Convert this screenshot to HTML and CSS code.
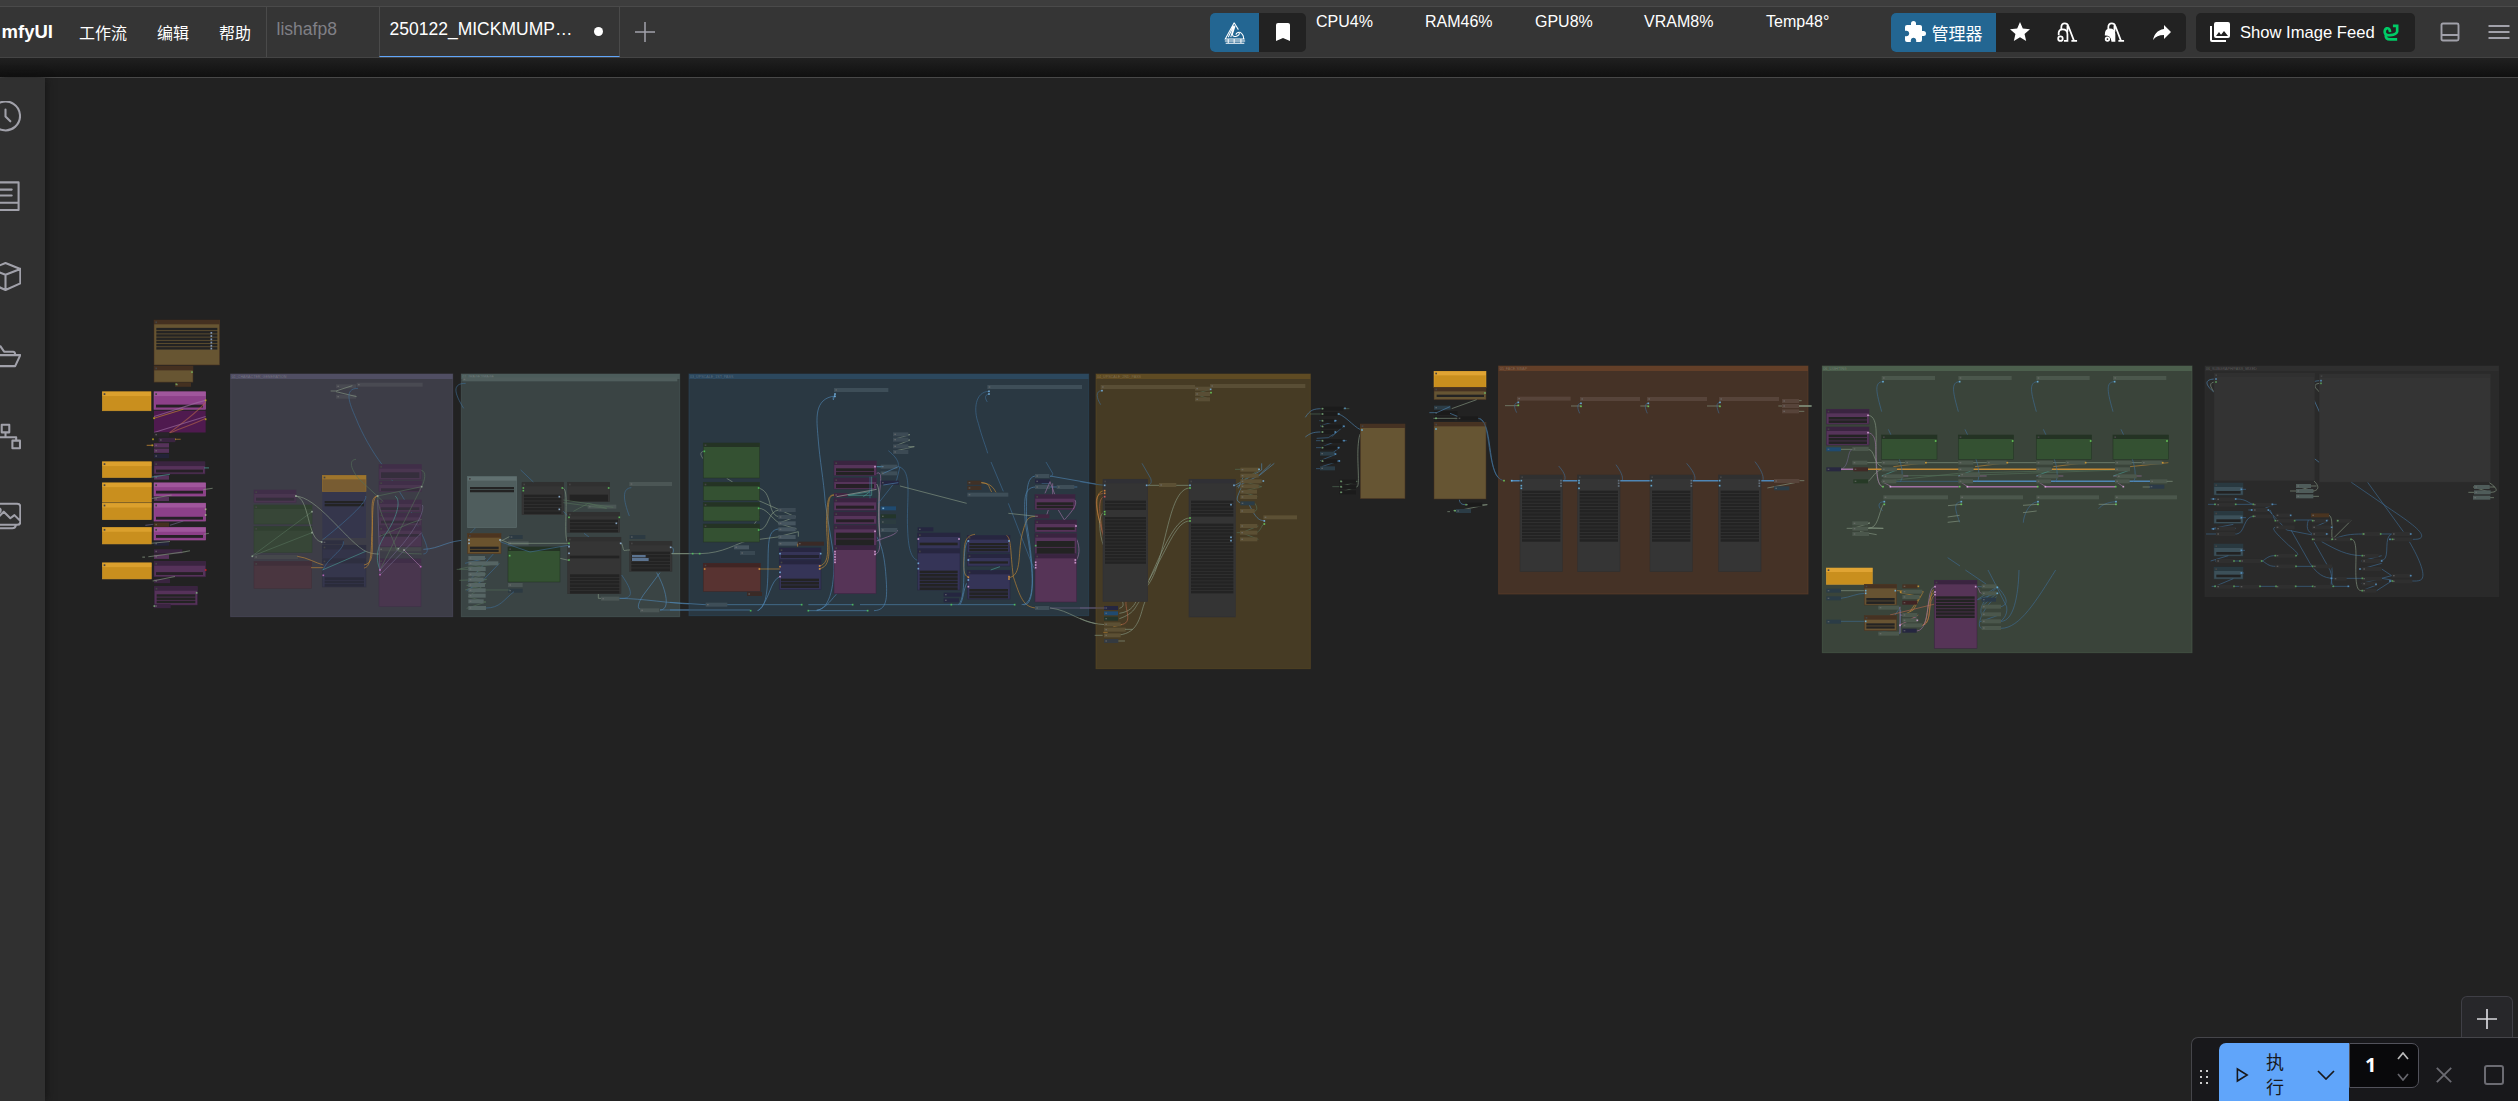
FILE: index.html
```html
<!DOCTYPE html>
<html lang="zh-CN">
<head>
<meta charset="utf-8">
<title>ComfyUI</title>
<link rel="stylesheet" href="styles.css">
</head>
<body>
<div class="app">
  <div class="strip"></div>
  <header class="menubar">
    <div class="brand"><span>mfyUI</span></div>
    <nav class="menus"><span>工作流</span><span>编辑</span><span>帮助</span></nav>
    <div class="tabs">
      <div class="tab">lishafp8</div>
      <div class="tab active"><span>250122_MICKMUMP…</span><i class="unsaved"></i></div>
      <svg class="add" viewBox="0 0 20 20"><path d="M10 0V20M0 10H20"/></svg>
    </div>
    <div class="tools">
      <div class="group">
        <button class="blue w49"><svg class="boat" viewBox="0 0 26 26"><path d="M12 1L1.500 20H24.500M12 1L17 9M11 5L5 18M12 4L8 18M13 5L10 14Q10 18 14 17Q19 16 18 12Q15 12 14 15M19 12Q24 16 23 20M1 22.500H25M2 25H24M5 20V25M12 20V25M20 20V25"/></svg></button>
        <button class="w47"><svg class="mdi" viewBox="0 0 24 24"><path d="M17,3H7A2,2 0 0,0 5,5V21L12,18L19,21V5C19,3.890 18.100,3 17,3Z"/></svg></button>
      </div>
      <div class="stats"><span>CPU4%</span><span>RAM46%</span><span>GPU8%</span><span>VRAM8%</span><span>Temp48°</span></div>
      <div class="group">
        <button class="blue manager"><svg class="mdi" viewBox="0 0 24 24"><path d="M20.500,11H19V7C19,5.890 18.100,5 17,5H13V3.500A2.500,2.500 0 0,0 10.500,1A2.500,2.500 0 0,0 8,3.500V5H4A2,2 0 0,0 2,7V10.800H3.500C5,10.800 6.200,12 6.200,13.500C6.200,15 5,16.200 3.500,16.200H2V20A2,2 0 0,0 4,22H7.800V20.500C7.800,19 9,17.800 10.500,17.800C12,17.800 13.200,19 13.200,20.500V22H17A2,2 0 0,0 19,20V16H20.500A2.500,2.500 0 0,0 23,13.500A2.500,2.500 0 0,0 20.500,11Z"/></svg><span>管理器</span></button>
        <button class="w47"><svg class="mdi" viewBox="0 0 24 24"><path d="M12,17.270L18.180,21L16.540,13.970L22,9.240L14.810,8.620L12,2L9.190,8.620L2,9.240L7.450,13.970L5.820,21L12,17.270Z"/></svg></button>
        <button class="w47"><svg class="vac" viewBox="0 0 24 24"><path d="M5.500 8V6Q5.500 1.500 9.500 1.500Q12.500 1.500 13.500 4.500L20 21.500H23.500M17 21.500H23.500M12.500 4V11"/><path d="M2.500 15V12Q3 8.500 7 8.500Q12.500 8.500 12.500 14V21.500H8.500"/><circle cx="4.500" cy="19" r="2.600"/></svg></button>
        <button class="w47"><svg class="vac" viewBox="0 0 24 24"><path d="M5.500 8V6Q5.500 1.500 9.500 1.500Q12.500 1.500 13.500 4.500L20 21.500H23.500M17 21.500H23.500M12.500 4V11"/><path fill="#fff" d="M2.500 14.500Q2.500 8.500 7 8.500Q12.500 8.500 12.500 14V21.500H10Q9 14.500 2.500 14.500Z"/><circle cx="4.500" cy="19.500" r="2"/></svg></button>
        <button class="w46"><svg class="mdi" viewBox="0 0 24 24"><path d="M21,12L14,5V9C7,10 4,15 3,20C5.500,16.500 9,14.900 14,14.900V19L21,12Z"/></svg></button>
      </div>
      <div class="group feed">
        <button><svg class="mdi" viewBox="0 0 24 24"><path d="M22,16V4A2,2 0 0,0 20,2H8A2,2 0 0,0 6,4V16A2,2 0 0,0 8,18H20A2,2 0 0,0 22,16M11,12L13.030,14.710L16,11L20,16H8M2,6V20A2,2 0 0,0 4,22H18V20H4V6"/></svg><span>Show Image Feed</span><svg class="snake" viewBox="0 0 18 18"><path d="M7.500 8.500Q7 4 4 4.500Q1.500 5.500 1.800 9Q2.500 12.500 8 11.800Q14 11 15 8V2H10.500M3 11Q2 16.500 8 16.300H15"/></svg></button>
      </div>
      <svg class="ico panel" viewBox="0 0 20 20"><path d="M3 1.500H17Q18.500 1.500 18.500 3V17Q18.500 18.500 17 18.500H3Q1.500 18.500 1.500 17V3Q1.500 1.500 3 1.500ZM1.500 13H18.500"/></svg>
      <svg class="ico burger" viewBox="0 0 22 20"><path d="M.500 4H21.500M.500 10H21.500M.500 16H21.500"/></svg>
    </div>
  </header>
  <div class="shade"></div>
  <main class="main">
    <aside class="side">
      <svg viewBox="-45 -45 90 90"><path d="M-40 -14A42 42 0 1 1 -38 16M-42 -30V-12H-24M0 -20V0L14 14"/></svg>
      <svg viewBox="-45 -45 90 90"><path d="M-30 -41H38V39H-30Q-38 39 -38 30V-32Q-38 -41 -30 -41ZM-38 18H38M-18 -20H18M-18 -3H18"/></svg>
      <svg viewBox="-45 -45 90 90"><path d="M0 -39L43 -22V20L0 39L-43 20V-22ZM-43 -22L0 -5L43 -22M0 -5V39"/></svg>
      <svg viewBox="-45 -45 90 90"><path d="M-41 28V-24Q-41 -30 -35 -30H-15L-4 -14H22Q28 -14 28 -6V-4M-41 28L-26 -4H43L28 28H-41"/></svg>
      <svg viewBox="-45 -45 90 90"><path d="M-11 -34H11V-12H-11ZM-42 12H-20V34H-42ZM20 12H42V34H20ZM0 -12V2M-31 12V2H31V12"/></svg>
      <svg viewBox="-45 -45 90 90"><path d="M-30 -37H34Q43 -37 43 -28V16Q43 24 34 24H-30Q-38 24 -38 16V-28Q-38 -37 -30 -37ZM-38 20L-5 -14L14 5L26 -4L42 12M-28 34H20Q28 34 30 26"/><circle cx="-20" cy="-18" r="6"/></svg>
    </aside>
    <svg class="graph" id="graph" viewBox="45 78 2473 1023"></svg>
  </main>
</div>
<div class="dock">
  <div class="plus"><svg viewBox="0 0 20 20"><path d="M10 0V20M0 10H20"/></svg></div>
  <div class="runbar">
    <svg class="grip" viewBox="0 0 9 15"><path d="M0 0h2v2H0zM6 0h2v2H6zM0 6h2v2H0zM6 6h2v2H6zM0 12h2v2H0zM6 12h2v2H6z"/></svg>
    <div class="run">
      <svg class="play" viewBox="0 0 14 16"><path d="M1.500 1.500V14.500L12 8Z"/></svg>
      <span>执<br>行</span>
      <svg class="chev" viewBox="0 0 18 10"><path d="M1 1L9 9L17 1"/></svg>
    </div>
    <div class="count"><span>1</span>
      <div><svg viewBox="0 0 12 8"><path d="M1 7L6 1L11 7"/></svg><svg class="dim" viewBox="0 0 12 8"><path d="M1 1L6 7L11 1"/></svg></div>
    </div>
    <svg class="act" viewBox="0 0 20 20"><path d="M2 2L18 18M18 2L2 18"/></svg>
    <svg class="act sq" viewBox="0 0 20 20"><rect x="1" y="1" width="18" height="18" rx="2"/></svg>
  </div>
</div>
<script src="graph.js"></script>
</body>
</html>
```
FILE: styles.css
```css
* { box-sizing: border-box; }
body { margin: 0; background: #222; color: #fff; font-family: "Liberation Sans", "Noto Sans CJK SC", sans-serif; overflow: hidden; }
.app { height: 1101px; display: flex; flex-direction: column; }
svg { flex: none; fill: none; }
.strip { height: 7px; background: #3d3d3d; border-bottom: 1px solid #4a4a4a; }
.menubar { height: 51px; background: #353535; border-bottom: 1px solid #444; display: flex; flex: none; }
.shade { height: 20px; flex: none; background: linear-gradient(#202020, #101010); border-bottom: 1px solid #484848; }
.brand { width: 53px; display: flex; justify-content: flex-end; font-size: 18.500px; font-weight: bold; line-height: 49px; flex: none; }
.menus { display: flex; gap: 30px; padding: 0 14.500px 0 26px; font-size: 16px; line-height: 54px; white-space: nowrap; }
.tabs { display: flex; align-items: stretch; font-size: 17.500px; line-height: 44px; }
.tab { width: 113px; border-left: 1px solid #4a4a4a; padding-left: 10px; color: #808086; }
.tab.active { width: 241px; color: #fff; border-right: 1px solid #4a4a4a; border-bottom: 1px solid #60a5fa; display: flex; }
.unsaved { width: 9px; height: 9px; border-radius: 50%; background: #fff; margin: 20px 0 0 22px; }
.add { width: 20px; height: 20px; margin: 15px 0 0 15px; stroke: #a1a1aa; stroke-width: 1.500; }
.tools { margin-left: auto; width: 1308px; display: flex; align-items: flex-start; padding-top: 6px; }
.group { height: 39px; display: flex; background: #222; border-radius: 5px; overflow: hidden; }
button { border: 0; margin: 0; padding: 0; background: none; color: #fff; font: inherit; display: flex; align-items: center; justify-content: center; height: 39px; }
.blue { background: #236692; }
.w49 { width: 49px; } .w47 { width: 47px; } .w46 { width: 49px; }
.mdi { width: 24px; height: 24px; fill: #fff; }
.group > button > .mdi, .group > button > .vac { margin-top: -1px; }
.boat { width: 22px; height: 24px; stroke: #fff; stroke-width: 1.200; }
.vac { width: 22px; height: 21px; stroke: #fff; stroke-width: 2; }
.stats { width: 585px; padding: 0 0 0 10px; display: grid; grid-template-columns: 109px 110px 109px 122px 1fr; font-size: 16px; line-height: 17px; }
.manager { width: 105px; gap: 5px; font-size: 17px; padding-right: 2px; }
.feed { margin-left: 10px; font-size: 16.600px; width: 219px; }
.feed button { padding-left: 12px; gap: 8px; }
.snake { width: 17px; height: 17px; stroke: #0c6; stroke-width: 2.800; }
.ico { stroke: #a1a1aa; stroke-width: 1.900; height: 20px; margin-top: 9px; }
.panel { width: 20px; margin-left: 25px; }
.burger { width: 22px; margin-left: 28px; }
.main { flex: 1; display: flex; min-height: 0; }
.side { width: 45px; flex: none; background: #303030; display: flex; flex-direction: column; gap: 49px; padding-top: 23px; overflow: hidden; box-shadow: 0 0 9px #111; z-index: 1; }
.side svg { width: 31px; height: 31px; margin-left: -10px; stroke: #a1a1aa; stroke-width: 6; stroke-linejoin: round; stroke-linecap: round; flex: none; }
.graph { width: 2473px; height: 1023px; }
.dock { position: absolute; right: 0; bottom: 0; width: 327px; height: 105px; display: flex; flex-direction: column; align-items: flex-end; }
.plus { width: 52px; height: 41px; margin-right: 5px; background: #27272a; border: 1px solid #3f3f46; border-bottom: 0; border-radius: 6px 6px 0 0; display: flex; align-items: center; justify-content: center; padding-top: 4px; }
.plus svg { width: 20px; height: 20px; stroke: #d8d8dc; stroke-width: 1.700; }
.runbar { width: 327px; height: 64px; background: #18181b; border: 1px solid #45454a; border-right: 0; border-bottom: 0; border-radius: 7px 0 0 0; display: flex; padding-top: 5px; }
.grip { width: 9px; height: 15px; margin: 27px 0 0 8px; fill: #ccc; }
.run { width: 130px; height: 59px; margin-left: 10px; background: #60a5fa; border-radius: 7px 0 0 0; color: #18181b; display: flex; padding-left: 17px; }
.run svg { stroke: #18181b; stroke-width: 1.700; }
.play { width: 13px; height: 16px; margin-top: 24px; }
.run span { font-size: 18px; line-height: 25px; margin: 8px 0 0 17px; width: 18px; }
.chev { width: 18px; height: 10px; margin: 27px 0 0 33px; }
.count { width: 70px; height: 45px; background: #09090b; border: 1px solid #52525b; border-radius: 0 7px 7px 0; display: flex; justify-content: space-between; padding: 0 9px 0 15px; font-size: 20px; font-weight: bold; line-height: 42px; font-family: "Noto Sans", sans-serif; }
.count div { display: flex; flex-direction: column; gap: 13px; padding-top: 8px; }
.count svg { width: 12px; height: 8px; stroke: #bbb; stroke-width: 1.700; }
.count svg.dim { stroke: #66666c; }
.act { width: 18px; height: 18px; margin: 23px 0 0 16px; stroke: #6b6b72; stroke-width: 2; }
.act.sq { width: 20px; height: 20px; margin: 22px 0 0 31px; }
```
FILE: graph.js
```js
// Node graph, zoomed far out. One drawing command per line:
//   F x y w h fill bar name      group frame
//   r x y w h fill               plain block
//   n x y w h body title         node
//   w x y w count pitch          widget rows
//   c x y w fill                 collapsed node
//   l colour path                link
//   d colour x y ...             ports
const C = { b: '#4f86b5', g: '#899b85', G: '#55705a', o: '#c68a34', m: '#a171a5', t: '#4a9a94', r: '#b5664a', B: '#3e6d95', p: '#6e6488', w: '#a9b0a6' };
const scenes = [
[0, 70, `
n 462 700 197 126 #675532 #443020
w 469 722 183 7 9
d #9ab4d8 634 736 634 745 634 754 634 763 634 772 634 780
n 462 829 117 45 #675532 #443020
c 525 875 48 #443020
d #77b45e 576 846 529 880
n 307 901 146 53 #c98f1e #dba02d
n 462 901 155 49 #8d4089 #a0569c
r 468 937 141 8 #262026
r 462 954 155 61 #4f1a4f
l m M462 970C500 960 590 930 617 925
l r M508 1016C560 980 600 950 617 930
l m M462 1015L617 970
l r M510 1016C550 1000 600 985 617 975
l o M462 975L550 950
d #c8b020 617 925 617 978 459 1034 525 1034 457 1051 462 975
c 462 1015 45 #28242a
c 476 1030 50 #3a2440
c 462 1045 45 #56325a
c 462 1060 45 #56325a
c 462 1075 45 #232338
l o M440 1051H460M525 1034H542
n 307 1097 147 44 #c98f1e #dba02d
n 462 1097 153 34 #56325a #3a2440
r 468 1119 141 8 #262026
c 462 1135 45 #56325a
l t M455 1140L510 1132M612 1114H627
n 307 1156 147 54 #c98f1e #dba02d
n 462 1156 155 37 #8d4089 #a0569c
r 468 1178 141 8 #262026
c 462 1195 45 #56325a
l g M455 1200L515 1190M610 1175L638 1171
n 307 1213 147 46 #c98f1e #dba02d
n 462 1213 155 50 #8d4089 #a0569c
r 468 1251 141 8 #262026
c 462 1267 45 #443020
l p M436 1275L460 1272M510 1275L550 1263
d #b0c090 617 1230 617 1246
n 307 1281 147 46 #c98f1e #dba02d
n 462 1281 155 35 #8d4089 #a0569c
r 468 1302 141 8 #262026
c 462 1320 45 #232338
l g M455 1325L510 1320M612 1300L627 1297
c 462 1342 85 #3a2440
c 462 1357 45 #56325a
l g M427 1364H435M445 1363L548 1350L570 1346
n 307 1380 147 45 #c98f1e #dba02d
n 462 1376 155 43 #56325a #3a2440
r 468 1406 141 8 #262026
d #e02020 617 1400
c 462 1425 48 #3a2440
l g M458 1431L525 1418
n 463 1446 129 52 #56325a #3a2440
w 470 1468 116 3 9
c 462 1495 50 #3a2440
d #7fb57f 590 1464 463 1501
`, .35714],
[210, 350, `
F 62 72 666 728 #3d3d47 #504e63 01_CHARACTER_GENERATION
c 378 103 60 #484951
c 378 134 60 #484951
c 440 98 198 #494a52
l g M362 123H378M378 123L427 107M378 125L440 140
l B M444 115C400 115 418 160 438 205C455 250 490 310 515 342C550 400 590 450 620 520C655 590 660 610 640 612
n 132 420 126 38 #4a3650 #402e48
r 138 443 115 9 #352e3c
n 132 465 174 57 #374637 #304030
n 132 530 174 77 #374637 #304030
l G M125 619L306 485M125 619L306 548
c 132 615 132 #45474b
n 132 635 173 80 #4a3640 #402f3a
n 337 376 131 48 #785c32 #9e752c
r 337 426 131 138 #35364c
w 344 453 118 2 9
c 337 571 65 #2e2f40
n 337 586 131 40 #333449 #2e2f40
n 337 628 131 83 #35364c #2e2f40
w 344 682 118 3 10 #2a2b3a
n 507 344 127 45 #4a3650 #402e48
r 513 367 115 17 #352e3c
n 507 393 127 32 #4a3650 #402e48
r 513 415 115 8 #352e3c
n 507 450 127 36 #4a3650 #402e48
r 513 472 115 8 #352e3c
n 507 490 127 36 #4a3650 #402e48
r 513 512 115 8 #352e3c
n 507 530 127 60 #4a3650 #402e48
r 513 552 115 8 #352e3c
c 507 592 127 #45474b
n 507 627 126 142 #49364e #402e48
l g M255 438C320 440 400 560 460 600C480 612 500 612 507 612
l g M255 438C300 440 290 570 335 576
l B M467 438C475 455 400 520 337 570M400 574C405 600 350 625 340 660
l o M503 438C480 440 487 470 487 560C487 610 490 640 462 645M503 438C484 440 490 500 485 560C484 640 475 652 462 654M262 619C290 622 320 640 340 645M303 653H340
l t M337 660L467 604M555 438C575 450 560 500 535 540C500 590 495 620 510 660
l G M438 328C410 330 430 370 450 390L520 455M503 438L635 410M634 361C650 365 645 390 635 410L510 660
l G M503 440C500 480 550 560 560 600C590 615 620 610 635 612M507 560L600 520L635 508
l p M637 465C645 480 620 530 580 580L510 660M503 450L510 670M635 548L510 675
l m M582 600L632 650
l b M640 598C690 597 710 570 777 570
d #9fb09f 127 619 258 438 335 576 306 485 306 548 635 410 503 438 565 596 582 600
d #d070d0 632 650 510 660 510 674 340 676
F 754 72 655 728 #3a4444 #4c5c5b 02_IMAGE2IMAGE
c 757 82 645 #505e5d
l B M767 100C725 100 733 130 761 175M850 612L775 695M797 533L780 550
n 773 380 147 153 #4f5d5d #607070
w 780 411 132 2 9
n 936 397 125 97 #353535 #303030
w 942 434 112 6 10
n 1073 397 126 58 #353535 #303030
r 1079 434 115 20 #232323
c 1258 396 128 #4b5655
c 1133 464 86 #4b5655
l g M1060 415C1080 420 1055 580 1077 580
l G M1060 450L1210 472M1060 458L1190 475L1135 460L1090 484
l B M932 360L970 396M1060 484L1075 500M1264 413C1235 415 1240 450 1258 498M1122 550L1137 561
n 1073 487 156 60 #353535 #303030
w 1080 509 144 4 10
n 1073 562 160 169 #353535 #303030
r 1080 617 148 8 #232323
w 1080 673 148 6 10
n 1259 574 127 90 #353535 #303030
w 1264 605 116 6 10
r 1266 615 41 7 #5b7390
r 1266 624 50 9 #5b7390
c 1259 555 47 #2c3a42
n 773 551 100 60 #6a532e #4d3520
w 780 590 86 2 9
c 898 555 40 #2c3a42
c 894 574 62 #4b5655
l g M870 575L898 560M870 568L898 580H1077M1050 625L1076 631
n 894 591 156 105 #345232 #243324
c 894 699 44 #4b5655
c 894 716 44 #2c3a42
l G M740 658H775M748 691L830 688L770 706L828 720H900M765 720L828 700L775 740L828 756L770 775M748 657L828 640L865 640L775 655L828 672L775 690
l B M765 640L828 625M870 575L960 606L1080 585M828 774C870 774 880 750 912 725M868 640L820 690L770 722M1235 675C1280 740 1260 745 1228 745
c 775 618 50 #566564
c 775 634 90 #566564
c 775 651 52 #566564
c 775 667 50 #566564
c 775 683 46 #566564
c 775 699 50 #566564
c 775 715 52 #566564
c 775 731 52 #566564
c 775 748 46 #566564
c 775 768 53 #566564
l g M1165 732V745H1175M1235 580C1245 610 1235 600 1260 600M1384 611H1440
l b M1386 592C1395 600 1388 612 1386 612M1228 745C1300 746 1380 760 1440 762M1350 668L1300 735C1280 765 1280 780 1300 780M1340 668C1365 710 1385 780 1350 780H1440
c 1173 740 55 #4b5655
c 1290 775 58 #4b5655
d #62d062 940 414 940 422 1057 414 1196 414 1077 502 1228 502 1077 580 1077 630 899 617
d #9ec4e8 1048 440 1048 478 1219 520 1232 580 1382 592 777 570 777 580 870 570 1077 590 1077 610
`],
[670, 350, `
F 57 72 1199 725 #2a3842 #2c485e 03_UPSCALE_1ST_PASS
l b M495 132L490 150C488 142 490 138 495 138C430 145 440 210 444 260C450 340 460 380 466 460L490 610C497 700 480 780 440 780
l b M0 757L105 764H395M0 780H240M415 764H548M415 782H593M570 764H1035M262 782C310 770 285 600 300 560C305 540 320 537 328 537M265 782C300 750 300 690 330 680M440 782C470 775 490 740 500 732M612 782C650 780 653 750 648 680C642 590 625 570 620 560
l g M5 611H90C160 610 200 580 230 573L330 560M103 304C85 305 95 320 99 326M170 385L188 396M265 414C310 425 290 490 325 500M265 475C290 475 300 500 328 520M265 540C300 540 290 480 330 480M253 522L268 500M262 450L375 500M378 500L325 520L380 537M385 560V545L325 560
n 100 279 169 105 #345132 #243324
n 100 397 169 54 #345132 #243324
n 100 458 169 55 #345132 #243324
n 100 522 169 54 #345132 #243324
n 100 640 171 84 #583331 #402524
c 231 726 45 #3a2a26
c 192 586 45 #46555f
c 210 603 45 #394852
c 325 474 52 #3c4a54
c 325 495 52 #3c4a54
c 325 514 52 #46555f
c 325 532 52 #46555f
c 325 555 52 #46555f
c 325 575 60 #46555f
c 383 575 79 #3a2a26
n 328 594 125 34 #353457 #272640
r 333 615 114 9 #232330
n 328 631 125 88 #353457 #272640
w 333 686 114 3 10
l o M268 657H330M383 581V590M448 648C490 640 465 560 470 500C472 440 478 435 494 434M448 656C495 650 470 560 474 500C475 440 480 436 494 436
c 492 114 163 #3e4e58
n 492 333 127 44 #56345a #3a2440
w 498 355 114 2 11
n 492 384 127 33 #56345a #3a2440
r 498 402 114 12 #262026
c 492 429 40 #402540
l t M620 350L660 352M535 436L600 425L580 440M535 436H605V380
n 492 445 127 36 #56345a #3a2440
r 498 467 114 9 #262026
n 492 486 127 36 #56345a #3a2440
r 498 508 114 9 #262026
n 492 526 127 60 #56345a #3a2440
w 498 548 114 2 20
n 492 588 126 143 #563457 #3a2440
l m M620 370C640 360 630 400 627 450C625 550 640 610 615 612M683 540C680 555 650 560 620 573
l w M620 402C635 420 620 500 630 560M500 440L620 418
l B M655 302C690 330 685 345 685 350C730 360 708 450 713 540C715 600 725 630 748 632M690 350L680 390L625 460M600 445V380
l g M690 408L890 460M670 253L720 254L672 268L720 270L672 289L733 290L670 304
c 669 247 46 #3c4a54
c 669 263 46 #3c4a54
c 669 283 46 #3c4a54
c 669 300 46 #3c4a54
c 632 344 50 #3e4e58
c 632 364 50 #3e4e58
c 632 392 55 #252640
c 632 469 46 #1f4a70
c 632 493 46 #23352a
c 632 510 46 #2c3c40
c 632 534 50 #3e4e58
l b M620 350H640M685 350L640 370M685 398L640 405
c 743 532 47 #252640
n 743 549 127 47 #353457 #272640
w 749 578 114 1 10
n 743 598 127 122 #353457 #272640
w 749 662 114 6 10
c 821 728 52 #252640
c 821 745 46 #252640
c 952 105 284 #3e4e58
l B M957 124C915 125 910 180 925 220C935 260 948 290 953 310M963 336L1000 424M1015 460L1085 640C1095 660 1097 660 1097 660M957 132C940 135 948 150 952 156M1128 336L1148 370C1150 378 1140 380 1140 380
c 892 392 42 #403126
c 892 408 42 #403126
c 892 428 123 #3e4e58
l o M934 398C960 400 955 410 965 426M934 398C970 400 975 425 978 427
n 892 557 128 50 #353457 #272640
w 898 579 116 3 9
n 892 612 128 36 #353457 #272640
w 898 634 116 1 9
n 892 661 128 86 #353457 #272640
w 898 717 116 3 10
l o M895 680C880 680 880 650 882 620C882 570 890 557 915 553M1015 683C1060 680 1040 600 1060 540C1070 500 1080 500 1100 499M1010 556C1025 570 1020 600 1030 680C1050 740 1060 773 1100 774
l t M962 660L990 650
l b M1097 378C1070 380 1068 420 1070 520C1090 640 1100 770 1060 764M1097 411C1060 412 1062 450 1066 520C1095 680 1095 764 1055 764M870 764C880 750 880 720 890 700M865 764C895 740 870 590 895 573M1140 378L1300 406M1140 411H1222M1115 400H1140
c 1095 372 43 #3e4e58
c 1095 388 45 #252640
c 1095 405 45 #3e4e58
c 1160 405 53 #3e4e58
l m M1125 430L1140 395L1155 435M1148 400V435
n 1095 434 120 45 #56345a #3a2440
w 1100 457 110 2 10
l m M1215 450C1225 465 1200 490 1183 510L1165 480M1135 480L1130 495M1220 568C1230 590 1230 620 1215 635
c 1095 493 43 #402540
n 1095 510 125 36 #56345a #3a2440
w 1100 532 114 1 10
n 1095 551 125 60 #56345a #3a2440
w 1100 573 114 2 20
n 1095 613 125 143 #563457 #3a2440
l g M1015 490L1100 499M1140 774C1200 780 1230 820 1300 824
l p M1140 774H1300
c 1095 768 43 #3e4e58
c 107 758 65 #3e4e58
d #50d060 103 304 266 414 266 475 266 540 68 611 89 611 242 782 395 764 548 764 415 782 593 782 844 764 1034 764 1097 587
d #7fc0f0 495 132 495 139 330 611 330 667 452 611 745 640 745 656 957 124 957 132 895 573 1017 573 895 630 895 690 640 475
d #e8a040 104 657 268 657 330 650 449 648 449 657 895 682 1017 680 1017 687
d #e8b0e8 495 605 495 613 495 621 495 629 495 637 615 350 615 544 615 605 615 613 330 680 745 567 867 567 895 710 1097 637 1097 645 1097 653 1216 630 1216 638 1218 528
`],
[1080, 350, `
F 48 72 643 884 #463b24 #5f4b23 04_UPSCALE_2ND_PASS
c 62 105 283 #594e35
l B M66 122C45 122 50 145 62 164M186 340L212 385C217 400 210 406 200 406M0 395C30 400 50 404 75 406
l G M390 118L345 132L390 148
l g M200 406H330M0 805C20 815 50 823 75 824M200 710C260 640 260 415 330 414M203 700C260 570 290 505 330 504M207 690C270 580 290 513 330 513
c 345 110 45 #594e35
c 345 126 45 #594e35
c 345 142 45 #594e35
c 390 102 286 #594e35
l r M75 430C45 430 45 450 55 500C65 540 68 550 70 560M75 440C50 440 60 500 68 550
l o M75 422C40 422 50 480 60 520
l g M75 485C50 490 60 560 70 585
l g M115 855C180 850 180 790 195 755M118 790C150 785 160 770 168 755M118 806C165 790 165 770 178 755M118 775C135 770 128 760 128 755
l r M122 824C160 820 135 780 138 755
l o M100 830L125 824M70 847H83
n 69 388 134 366 #343434 #303035
w 75 452 123 3 10
w 75 501 123 15 9.500
n 327 388 139 413 #343434 #303035
w 333 452 127 5 10
w 333 521 127 22 9.600
c 237 399 52 #5c5034
l b M465 406L485 395L545 360L545 340M470 410L540 375L583 340M475 415L490 380M538 375L572 342M480 458C460 450 480 430 488 400M508 465C530 510 540 512 555 512
l G M465 358H540L485 393L545 410L485 425L532 440M525 460C540 485 520 485 515 485M470 548H485L535 528M485 548L535 568M530 548C545 540 545 522 553 522
c 481 353 55 #5c5034
c 481 371 55 #5c5034
c 481 388 64 #5c5034
c 481 403 55 #5c5034
c 481 419 50 #5c5034
c 481 435 50 #5c5034
c 481 454 43 #2b3c46
c 480 477 44 #5c5034
c 550 496 101 #5c5034
c 480 522 52 #5c5034
c 480 542 52 #5c5034
c 480 562 52 #5c5034
c 72 768 42 #252640
c 72 784 42 #1f4a70
c 72 800 42 #23352a
c 72 817 50 #5c5034
c 72 833 65 #5c5034
c 72 850 50 #5c5034
c 72 867 43 #343a40
l p M0 774H75
l g M135 838H158M44 856H68M115 873H135
d #80c0f0 66 122 74 406 200 406 330 406 392 118 453 464 453 562 453 572 462 406 537 358 550 393 553 513
d #f09040 74 422 74 430
d #f06060 74 440
d #70e060 74 485 74 493 330 414 330 504 330 513 393 128 553 522
l b M676 202C690 180 700 176 727 176M676 261C690 250 700 246 722 246M776 192C800 200 830 240 847 240
l B M718 212H770L720 228H792L755 260M770 246L745 263L710 265M708 272H800M770 273L720 293M708 293H778L750 315M770 312L720 332H780L725 350M708 356H727
l G M690 192H780M727 176H808M780 394H832L782 410H757M782 427L832 410
l g M832 410C840 400 830 330 835 280C838 250 842 249 846 249
c 722 170 68 #1b1b1b
c 722 186 50 #1b1b1b
c 722 207 40 #1b1b1b
c 722 224 65 #1b1b1b
c 722 240 40 #1b1b1b
c 722 267 65 #1b1b1b
c 722 287 50 #1b1b1b
c 720 305 45 #2b3c46
c 722 328 50 #1b1b1b
c 720 349 45 #2b3c46
c 778 389 50 #1b1b1b
c 778 405 50 #1b1b1b
c 778 421 50 #1b1b1b
d #70a870 727 176 727 192 727 212 727 229 727 246 727 272 727 293 727 333 783 394 783 410 783 427 846 249
d #5a9cd0 776 192 795 175 766 212 792 229 766 246 792 272 776 293 766 312 778 333
n 841 222 134 224 #665533 #463222
n 1062 64 156 49 #c98f1e #e0a433
n 1062 112 156 37 #665533 #463222
r 1070 134 142 7 #232323
l g M1190 149L1115 176
c 1062 167 50 #2b3c46
c 1062 183 70 #1b1b1b
c 1062 199 62 #1b1b1b
c 1132 199 62 #1b1b1b
l b M1195 205C1240 210 1220 370 1262 388M1110 170L1070 188H1048M1132 199L1110 190M1138 449C1140 464 1150 464 1158 464
n 1062 217 156 230 #665533 #463222
l g M1158 464H1222L1135 482H1120M1102 485H1110M1060 205H1132
c 1155 458 52 #1b1b1b
c 1128 477 45 #2b3c46
d #70c070 1215 129 1068 205 1125 482 1158 464
d #70c0f0 1068 237 846 240
`],
[1480, 350, `
F 56 48 928 684 #453226 #633f28 05_FACE-SWAP
c 111 140 161 #57443a
c 300 141 180 #57443a
c 501 141 180 #57443a
c 717 141 180 #57443a
l g M75 167H115M273 168H303M481 168H505M681 168H720M895 168H910M950 152H965M955 184H973M958 392H973M862 414L945 398
c 906 147 51 #57443a
c 906 162 51 #57443a
c 906 178 51 #57443a
c 882 387 76 #57443a
c 882 409 46 #2b3c46
L g M957 168H995
l B M115 158C100 158 102 172 110 188M303 160C290 160 292 175 299 190M505 160C492 160 495 175 502 190M720 158C707 158 710 172 717 190
l B M236 348C260 375 255 385 254 391M408 344C430 375 428 385 427 391M620 340C650 375 645 385 644 391M825 335C852 370 850 385 849 391
l B M0 206L10 215C30 240 25 380 68 391
L b M93 392H124M243 392H296M416 392H514M635 392H719M840 392H882
n 120 375 127 290 #353535 #303030
w 126 422 115 16 9.700
n 293 375 127 290 #353535 #303030
w 299 422 115 16 9.700
n 510 375 127 290 #353535 #303030
w 516 422 115 16 9.700
n 716 375 127 290 #353535 #303030
w 722 422 115 16 9.700
d #70c0f0 115 157 303 160 505 160 720 157 124 392 124 407 124 415 297 392 297 399 297 415 514 392 514 407 719 392 719 407 95 392
d #70e060 115 166 303 169 505 169 720 169 72 392
d #6f7f8f 243 392 243 400 243 408 416 392 416 400 416 408 634 392 634 400 634 408 838 392 838 400 838 408
`],
[1800, 350, `
F 67 48 1109 860 #3a443a #4c5f4d 06_LIGHTING
c 245 78 160 #4b574c
c 475 78 160 #4b574c
c 709 78 160 #4b574c
c 939 78 160 #4b574c
l B M250 95C220 95 230 130 245 185M480 95C450 95 460 130 475 185M714 95C684 95 694 130 709 185M944 95C914 95 924 130 939 185M265 238L273 255M495 238L503 255M730 238L738 255M963 238L971 255
n 79 178 128 44 #56345a #3a2440
w 86 201 115 2 10
n 79 231 128 54 #56345a #3a2440
w 86 254 115 3 10
n 245 255 166 73 #345132 #243324
n 475 255 166 73 #345132 #243324
n 709 255 166 73 #345132 #243324
n 939 255 167 73 #345132 #243324
l g M205 196C240 200 225 280 228 330C230 390 235 400 247 410M120 298H205C225 300 220 340 245 350M160 338H1090M205 394C220 380 225 365 245 358
l G M245 378L530 375L960 360M250 394L475 370L940 358
l p M123 358C150 350 140 300 158 298
l m M205 248C235 255 225 300 230 350C232 400 240 408 247 410M247 378H325M475 378H560M709 378H790M940 378H1025M245 395L275 410M480 395L503 410M714 395L737 410M948 395L970 410
L m M123 358H160M271 410H476M502 410H712M736 410H945
L o M204 358H245M290 358H480M520 358H714M755 358H945
l o M280 350L378 338M525 350L622 338M760 350L857 338M990 350L1105 338
L b M510 394H714M750 394H945M985 394H1050
l B M250 394H480M298 328C310 360 308 395 300 394M528 328C540 360 538 395 530 394M763 328C775 360 773 395 765 394M997 328C1009 360 1007 395 999 394
l t M245 378L290 360M475 378L520 360M709 378L755 360M940 378L990 360
c 79 292 44 #1f4a70
c 157 291 49 #4b574c
c 157 332 45 #4b574c
c 79 352 44 #282840
c 160 352 44 #402a26
c 160 388 44 #263a26
c 245 332 50 #4b574c
c 315 332 60 #4b574c
c 245 352 45 #4b574c
c 250 373 60 #4b574c
c 245 388 44 #4b574c
c 475 332 45 #4b574c
c 560 332 60 #4b574c
c 475 352 45 #4b574c
c 480 368 60 #4b574c
c 475 388 44 #4b574c
c 709 332 50 #4b574c
c 797 332 60 #4b574c
c 709 352 45 #4b574c
c 715 373 60 #4b574c
c 709 388 44 #4b574c
c 945 332 50 #4b574c
c 1025 332 62 #4b574c
c 945 352 45 #4b574c
c 950 373 60 #4b574c
c 945 388 44 #4b574c
c 1050 388 52 #4b574c
c 1048 404 45 #2b3a48
l g M1100 394H1118M1028 411H1050
c 250 436 194 #4b574c
c 480 436 189 #4b574c
c 709 436 188 #4b574c
c 944 436 187 #4b574c
l B M253 455C230 455 235 475 248 482M484 455C455 457 470 490 479 517M714 455C685 457 670 500 670 518M948 455C920 457 905 465 896 476
l g M250 463C235 490 235 535 205 535M444 467L484 463M669 466L714 463M896 463H948M443 501L479 496M443 517L479 513M669 488L710 483M140 535H250L205 533M160 519H210L160 535M180 545L230 554
c 157 514 47 #4b574c
c 157 530 47 #4b574c
c 157 546 50 #4b574c
l B M443 623L480 648M496 660L558 702M564 660L590 710L620 770C625 800 600 814 603 814M657 660C655 740 640 814 603 814M767 660C710 750 660 835 603 835M603 770C640 760 600 720 592 710L530 750L590 730L545 770M545 795C530 760 590 715 592 712M545 835C525 830 550 770 590 740M530 710H590M603 793L540 815
n 79 654 138 49 #c98f1e #e0a433
c 79 716 44 #2b3c46
c 79 739 44 #2b3c46
c 79 809 44 #2b3c46
l g M123 722H195
l B M123 745C150 742 170 730 195 730M123 814H195M235 773H300L285 795M235 850C250 840 290 855 300 850L302 780
l o M290 722L370 725L340 780L310 795M300 728L360 740L330 785M370 825C400 820 380 720 405 718M365 828C390 820 375 740 405 726
l r M270 795L405 762M300 825L355 795M368 825C400 815 380 750 405 735
l m M300 825L350 800L300 795M350 843C395 840 375 712 405 710M300 770V850M525 710C540 710 535 730 545 730
n 193 703 97 62 #675332 #463222
w 199 744 85 2 10
n 193 797 97 45 #675332 #463222
w 199 820 85 2 9
c 235 767 62 #4b574c
c 235 845 62 #4b574c
c 307 703 45 #463222
c 307 719 60 #4b574c
c 307 735 52 #4b574c
c 307 752 45 #402424
c 307 789 45 #4b574c
c 307 805 45 #4b574c
c 307 820 60 #4b574c
c 307 836 43 #252640
n 403 691 128 204 #563457 #3a2440
w 408 739 116 7 9.600
c 545 703 45 #4b574c
c 545 724 45 #4b574c
c 545 743 43 #2b3a48
c 545 764 58 #4b574c
c 545 787 58 #4b574c
c 545 808 58 #4b574c
c 545 828 58 #4b574c
d #70c0f0 249 95 479 95 713 95 944 95 253 455 484 455 714 455 948 455 197 722 197 730 286 722 197 814 592 712 592 730
d #70e060 407 273 638 273 872 273 1101 273 249 410 479 410 713 410 947 410 253 463 484 463 714 463 948 463
d #e8b0e8 204 196 204 248 271 410 502 410 736 410 970 410 405 710 405 726 405 734 527 710 352 811 300 826
d #e0a030 378 338 622 338 857 338 1088 338 355 709 302 726
`],
[2190, 350, `
F 45 48 881 692 #2a2a2a #2f2f2f 06_SUBGRAPH/PASS_MIXED
l b M78 87C40 87 45 105 74 128M393 92C375 92 372 96 372 96M372 150L389 187M372 325L389 338
l g M78 96C55 96 60 110 72 125M393 100C365 100 375 115 389 126M372 393C395 415 378 423 368 423M898 398C930 420 920 427 900 427
n 72 69 302 323 #333333 #303030
n 388 72 513 324 #343434 #313131
n 72 399 87 36 #3c5059 #293940
r 79 423 73 8 #222222
n 72 484 87 36 #3c5059 #293940
r 79 508 73 8 #222222
n 72 582 87 36 #3c5059 #293940
r 79 606 73 8 #222222
n 72 651 87 36 #3c5059 #293940
r 79 674 73 8 #222222
l B M62 447H140C170 447 175 460 190 463M54 463H260M140 552C165 550 160 500 190 499M65 536L130 523M48 552H140M64 537L138 535M62 633L115 617M75 633H218C235 620 240 617 256 617M218 633C235 645 240 649 256 649H368M75 709L130 686M65 709H478M154 418H168M154 503H168M154 601H165M154 669H162
l B M235 480L290 540L368 555M250 463L215 480H175M240 480L255 510H415M255 532C240 535 270 560 295 585C320 605 330 615 318 617M303 540L360 640C380 670 400 685 430 685H515M372 575L420 660C430 690 420 700 430 705M395 575C440 600 470 616 515 617M430 568C460 555 480 552 520 552H665M368 552H415M355 510C345 540 360 550 370 552M372 532L410 515M425 650C430 680 420 700 425 709
l B M484 397L605 480C680 530 700 550 694 562C690 568 680 568 668 568M533 397L640 545M658 575C690 630 710 680 692 690C685 694 675 693 665 693M515 633L575 617M515 633L580 630C600 620 580 560 605 552M515 657L575 640M575 657L605 677H665M575 685L605 690M515 700L575 685L605 677M560 722L605 693H665M515 722L560 705
l g M417 496C430 500 424 540 426 568M483 512L430 565M426 568H485C505 570 495 640 498 685C500 715 505 722 515 722M300 423H370L320 408H380M320 439H387M835 427H900L850 411H915M850 443H912
c 78 442 58 #2f2f2f
c 78 458 58 #2f2f2f
c 188 458 60 #2f2f2f
c 188 474 45 #2f2f2f
c 78 530 58 #2f2f2f
c 78 546 58 #2f2f2f
c 188 493 60 #2f2f2f
c 256 490 45 #2f2f2f
c 256 506 60 #2f2f2f
c 256 526 58 #2f2f2f
c 78 627 56 #2f2f2f
c 150 627 65 #2f2f2f
c 256 611 62 #2f2f2f
c 256 643 62 #2f2f2f
c 78 704 56 #2f2f2f
c 148 704 62 #2f2f2f
c 256 704 62 #2f2f2f
c 368 704 58 #2f2f2f
c 363 490 54 #4a3420
c 366 506 46 #2f2f2f
c 366 526 60 #2f2f2f
c 366 546 46 #2f2f2f
c 366 562 60 #2f2f2f
c 437 506 45 #2f2f2f
c 430 562 55 #2f2f2f
c 368 643 58 #2f2f2f
c 430 680 40 #2f2f2f
c 516 546 58 #2f2f2f
c 516 611 50 #2f2f2f
c 516 627 58 #2f2f2f
c 516 651 58 #2f2f2f
c 516 680 60 #2f2f2f
c 516 695 45 #2f2f2f
c 516 716 42 #2f2f2f
c 605 546 58 #2f2f2f
c 605 562 62 #2f2f2f
c 605 671 58 #2f2f2f
c 605 688 62 #2f2f2f
c 318 402 45 #4f5c5a
c 318 417 52 #4f5c5a
c 318 433 52 #4f5c5a
c 852 405 47 #4f5c5a
c 852 421 50 #4f5c5a
c 849 437 52 #4f5c5a
d #5a9cd0 78 87 393 92 154 418 154 503 154 601 154 669 70 447 70 537 137 447 247 463 235 480 185 480 302 496 410 512 410 552 662 552 662 677 575 633 425 532 475 709 600 568 600 693 558 703 510 657 424 685
d #5fb060 78 96 393 100 75 463 137 463 190 463 190 499 256 512 314 512 256 617 318 617 318 649 368 649 368 512 368 568 426 568 443 512 483 568 520 552 572 552 607 568 607 693 517 617 517 685 75 709 132 709 210 709 258 709 317 709 368 709 430 709 517 722 132 633 150 633 215 633
`]];
const out = [];
const rect = (x, y, w, h, f, extra = '') => out.push(`<rect x="${x}" y="${y}" width="${w}" height="${h}" fill="${f}" ${extra}/>`);
const draw = {
  F(x, y, w, h, f, bar, name) {
    rect(x, y, w, h, f, `stroke="${bar}" stroke-width="3" stroke-opacity=".6"`);
    rect(x, y, w, 15, bar);
    out.push(`<text x="${+x + 3}" y="${+y + 12}" fill="#fff" fill-opacity=".2">${name}</text>`);
  },
  r: rect,
  n(x, y, w, h, body, title) {
    rect(x, y, w, h, body, `stroke="${title}" stroke-width="2" stroke-opacity=".8"`);
    rect(x, y, w, 12, title);
    rect(+x + 4, +y + 4, 5, 5, '#444');
  },
  w(x, y, w, count, pitch, fill = '#232323') {
    for (let i = 0; i < count; i++) rect(x, +y + i * pitch, w, pitch - 2.2, fill);
  },
  c(x, y, w, f) {
    rect(x, y, w, 12, f);
    rect(+x + 4, +y + 4, 5, 4, '#777', 'fill-opacity=".6"');
  },
  l(c, ...d) { out.push(`<path d="${d.join(' ')}" stroke="${C[c]}" stroke-width="3" stroke-opacity=".62"/>`); },
  L(c, ...d) { out.push(`<path d="${d.join(' ')}" stroke="${C[c]}" stroke-width="4.500"/>`); },
  d(c, ...p) {
    for (let i = 0; i < p.length; i += 2) rect(p[i] - 2.5, p[i + 1] - 2.5, 5, 5, c, 'fill-opacity=".8"');
  }
};
for (const [ox, oy, text, sy = .33333] of scenes) {
  out.push(`<g transform="translate(${ox} ${oy}) scale(.33333 ${sy})" font-size="11" font-family="Liberation Sans">`);
  for (const line of text.trim().split('\n')) {
    const [op, ...args] = line.split(' ');
    draw[op](...args);
  }
  out.push('</g>');
}
document.getElementById('graph').innerHTML = out.join('');
```
